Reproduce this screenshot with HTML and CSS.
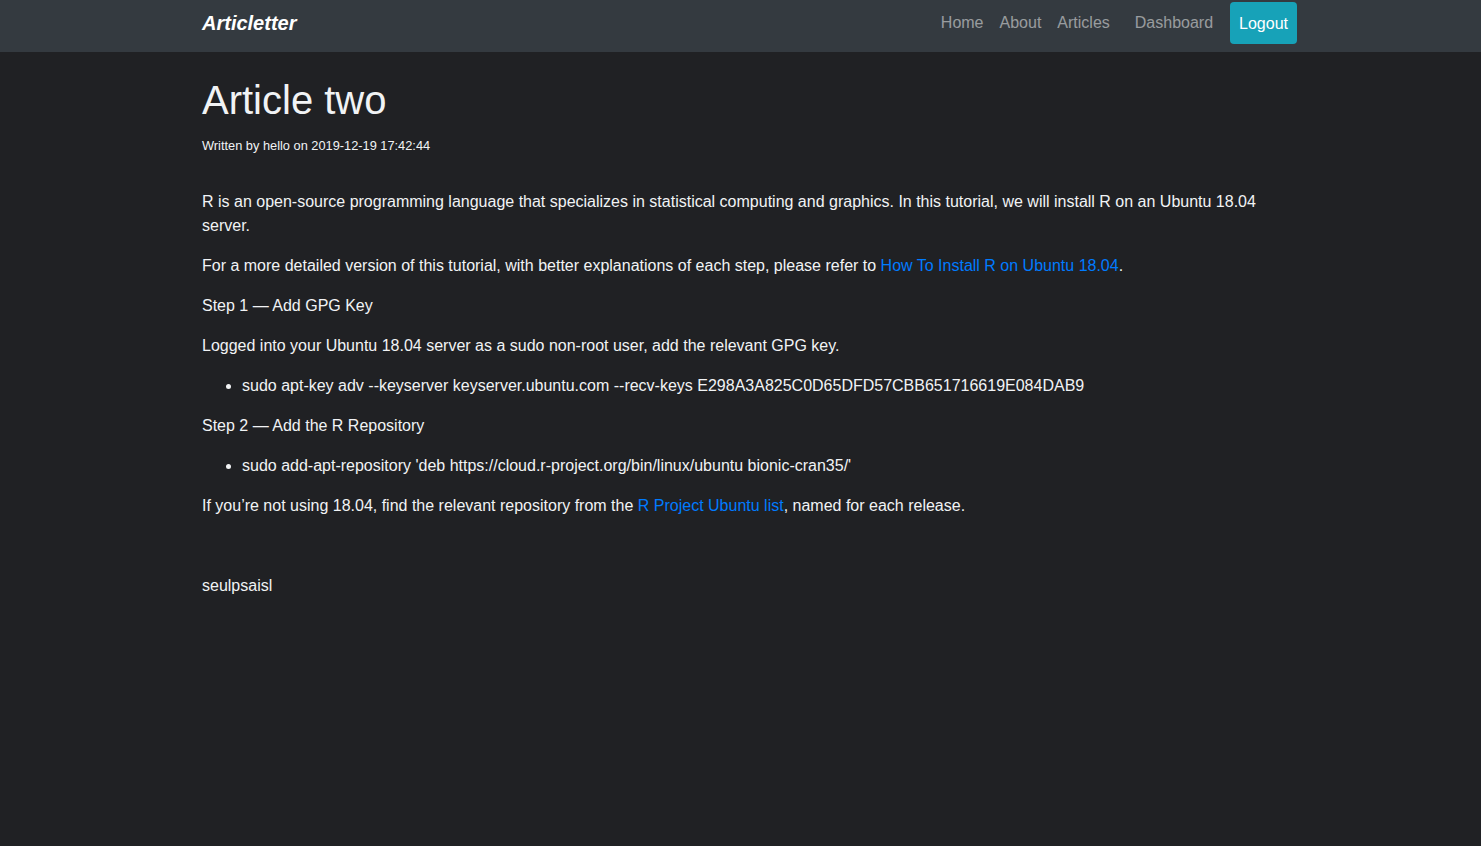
FILE: index.html
```html
<!DOCTYPE html>
<html lang="en">
<head>
<meta charset="utf-8">
<title>Article two</title>
<link rel="stylesheet" href="styles.css">
</head>
<body>
<nav class="navbar">
  <div class="container nav-inner">
    <a class="brand" href="#">Articletter</a>
    <div class="nav-links">
      <a class="nav-link" href="#">Home</a>
      <a class="nav-link" href="#">About</a>
      <a class="nav-link" href="#">Articles</a>
      <a class="nav-link dash" href="#">Dashboard</a>
      <a class="btn-logout" href="#">Logout</a>
    </div>
  </div>
</nav>
<main class="container content">
  <h1 class="title">Article two</h1>
  <p class="meta">Written by hello on 2019-12-19 17:42:44</p>
  <div class="body">
    <p>R is an open-source programming language that specializes in statistical computing and graphics. In this tutorial, we will install R on an Ubuntu 18.04 server.</p>
    <p>For a more detailed version of this tutorial, with better explanations of each step, please refer to <a href="#">How To Install R on Ubuntu 18.04</a>.</p>
    <p>Step 1 — Add GPG Key</p>
    <p>Logged into your Ubuntu 18.04 server as a sudo non-root user, add the relevant GPG key.</p>
    <ul>
      <li>sudo apt-key adv --keyserver keyserver.ubuntu.com --recv-keys E298A3A825C0D65DFD57CBB651716619E084DAB9</li>
    </ul>
    <p>Step 2 — Add the R Repository</p>
    <ul>
      <li>sudo add-apt-repository 'deb https://cloud.r-project.org/bin/linux/ubuntu bionic-cran35/'</li>
    </ul>
    <p>If you’re not using 18.04, find the relevant repository from the <a href="#">R Project Ubuntu list</a>, named for each release.</p>
    <p>&nbsp;</p>
    <p>seulpsaisl</p>
  </div>
</main>
</body>
</html>
```

FILE: styles.css
```css
* { box-sizing: border-box; }
html, body { margin: 0; padding: 0; }
body {
  background: #202124;
  color: #f1f3f5;
  font-family: "Liberation Sans", Arial, sans-serif;
  font-size: 16px;
  line-height: 24px;
  min-height: 846px;
}
a { text-decoration: none; }
.container {
  width: 1095px;
  margin-left: 202px;
}
.navbar {
  background: #343a40;
  height: 52px;
}
.nav-inner {
  display: flex;
  align-items: center;
  justify-content: space-between;
  height: 52px;
}
.brand {
  color: #fff;
  font-weight: bold;
  font-style: italic;
  font-size: 20px;
  line-height: 30px;
  margin-top: -6px;
}
.nav-links {
  display: flex;
  align-items: center;
  height: 52px;
}
.nav-link {
  color: rgba(255,255,255,0.5);
  padding: 0 8px;
  line-height: 24px;
  margin-top: -6px;
}
.nav-link.dash { margin-left: 9px; margin-right: 9px; }
.btn-logout {
  background: #17a2b8;
  color: #fff;
  border-radius: 4px;
  height: 42px;
  line-height: 41px;
  padding: 1px 9px 0 9px;
  margin-top: -6px;
}
.content { padding-top: 24px; }
.title {
  font-size: 40px;
  font-weight: 500;
  line-height: 48px;
  margin: 0 0 12px 0;
  color: #f1f3f5;
}
.meta {
  font-size: 12.8px;
  line-height: 20px;
  margin: 0 0 34px 0;
}
.body p { margin: 0 0 16px 0; }
.body ul { margin: 0 0 16px 0; padding-left: 40px; }
.body a { color: #007bff; }
```
